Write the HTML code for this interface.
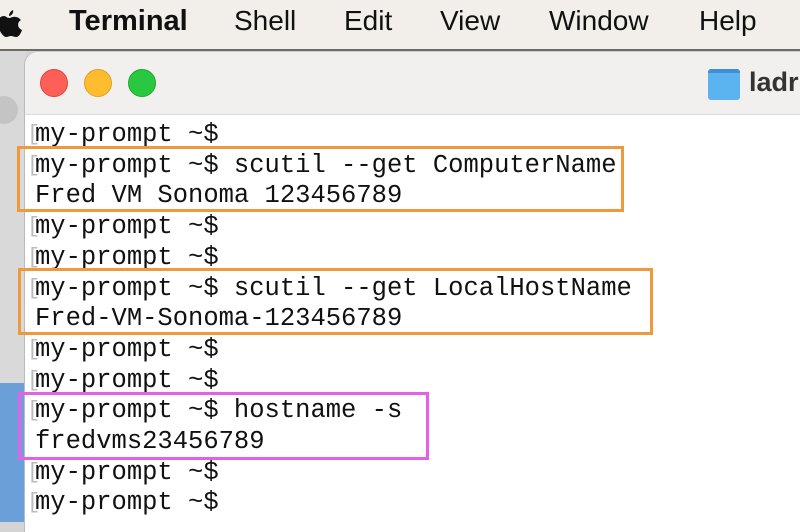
<!DOCTYPE html>
<html><head><style>
html,body{margin:0;padding:0;width:800px;height:522px;overflow:hidden;background:#d4d4d4;font-family:"Liberation Sans",sans-serif}
.menu{position:absolute;left:0;top:0;width:800px;height:49px;background:#f2efea;border-bottom:2px solid #6d6b68}
.menu span{position:absolute;top:5px;font-size:28px;color:#111}
.side{position:absolute;left:0;top:51px;width:26px;height:471px;background:#d9d9d9}
.win{position:absolute;left:24px;top:51px;width:800px;height:480px;background:#fff;border-radius:14px 0 0 0;overflow:hidden;border-left:1px solid #bbb;border-top:1px solid #ccc}
.title{height:62px;background:#f1f0ef;border-bottom:1px solid #dcdcdc;position:relative}
.dot{position:absolute;top:17px;width:26px;height:26px;border-radius:50%}
.term{position:absolute;left:0;top:2px;font-family:"Liberation Mono",monospace;font-size:25.5px;color:#111;white-space:pre}
.ln{position:absolute;left:11px;height:30px;line-height:30px}
.ln b{font-weight:normal;color:#bbb;position:absolute;left:-8px;font-size:22px}
.box{position:absolute;border:3px solid #ee9a3c}
</style></head><body>
<div class="menu">
<svg style="position:absolute;left:-4px;top:8px" width="26" height="32" viewBox="0 0 26 32"><path d="M17 2c1 3-2 6-4 6 0-3 2-5 4-6zM13 10c2 0 4-2 7-1 2 0 4 2 5 3-4 2-4 8 1 10-1 3-3 7-6 7-2 0-3-1-5-1s-3 1-5 1c-3 0-8-7-8-14 0-5 3-7 6-7 2 0 3 2 5 2z" fill="#111"/></svg>
<span style="left:69px;font-weight:bold;font-size:29px">Terminal</span>
<span style="left:234px">Shell</span>
<span style="left:344px">Edit</span>
<span style="left:440px">View</span>
<span style="left:549px">Window</span>
<span style="left:699px">Help</span>
</div>
<div class="side">
<div style="position:absolute;left:-10px;top:45px;width:28px;height:28px;border-radius:50%;background:#c4c4c4"></div>
<div style="position:absolute;left:0;top:332px;width:26px;height:139px;background:#6b9fd8"></div>
</div>
<div class="win">
<div class="title">
<div class="dot" style="left:15px;background:#fe5f57;border:1px solid #e0443e"></div>
<div class="dot" style="left:59px;background:#febc2e;border:1px solid #dea123"></div>
<div class="dot" style="left:103px;background:#29c840;border:1px solid #1aab29"></div>
<div style="position:absolute;left:683px;top:17px;width:32px;height:27px;background:#5bb4ef;border-radius:3px;border-top:4px solid #3f8fd8"></div>
<span style="position:absolute;left:724px;top:15px;font-size:27px;font-weight:bold;color:#333">ladr</span>
</div>
</div>
<div class="term">
<div class="ln" style="top:118px;left:35px"><b>[</b>my-prompt ~$</div>
<div class="ln" style="top:149px;left:35px"><b>[</b>my-prompt ~$ scutil --get ComputerName</div>
<div class="ln" style="top:179px;left:35px">Fred VM Sonoma 123456789</div>
<div class="ln" style="top:210px;left:35px"><b>[</b>my-prompt ~$</div>
<div class="ln" style="top:241px;left:35px"><b>[</b>my-prompt ~$</div>
<div class="ln" style="top:272px;left:35px"><b>[</b>my-prompt ~$ scutil --get LocalHostName</div>
<div class="ln" style="top:302px;left:35px">Fred-VM-Sonoma-123456789</div>
<div class="ln" style="top:333px;left:35px"><b>[</b>my-prompt ~$</div>
<div class="ln" style="top:364px;left:35px"><b>[</b>my-prompt ~$</div>
<div class="ln" style="top:394px;left:35px"><b>[</b>my-prompt ~$ hostname -s</div>
<div class="ln" style="top:425px;left:35px">fredvms23456789</div>
<div class="ln" style="top:456px;left:35px"><b>[</b>my-prompt ~$</div>
<div class="ln" style="top:486px;left:35px"><b>[</b>my-prompt ~$</div>
</div>
<div class="box" style="left:17px;top:146px;width:601px;height:60px"></div>
<div class="box" style="left:18px;top:268px;width:629px;height:61px"></div>
<div class="box" style="left:18px;top:392px;width:405px;height:62px;border-color:#e660e6"></div>
</body></html>
